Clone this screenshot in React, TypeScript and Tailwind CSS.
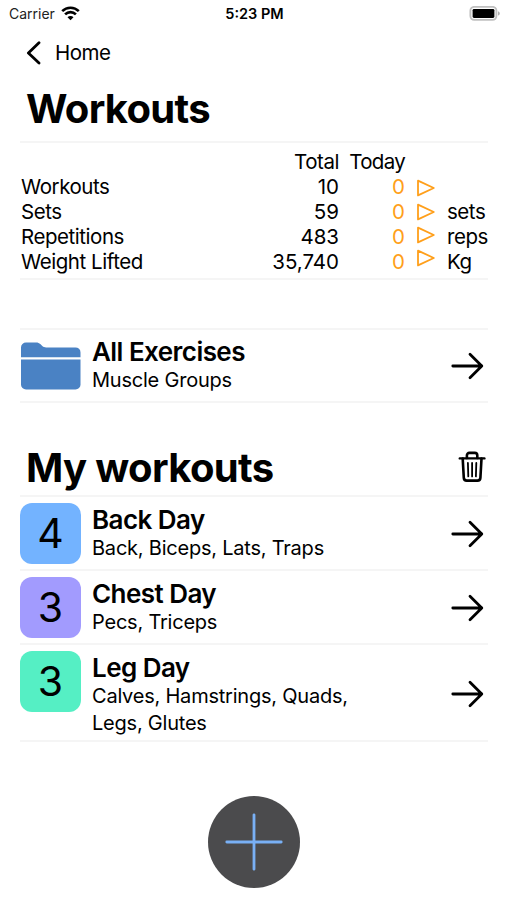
import React from 'react';

interface Stat {
  label: string;
  total: string;
  today: number;
  unit: string;
}

interface Workout {
  name: string;
  muscles: string;
  count: number;
  color: string;
}

const stats: Stat[] = [
  { label: 'Workouts', total: '10', today: 0, unit: '' },
  { label: 'Sets', total: '59', today: 0, unit: 'sets' },
  { label: 'Repetitions', total: '483', today: 0, unit: 'reps' },
  { label: 'Weight Lifted', total: '35,740', today: 0, unit: 'Kg' },
];

const workouts: Workout[] = [
  { name: 'Back Day', muscles: 'Back, Biceps, Lats, Traps', count: 4, color: 'bg-[#73b3ff]' },
  { name: 'Chest Day', muscles: 'Pecs, Triceps', count: 3, color: 'bg-[#a29bfe]' },
  { name: 'Leg Day', muscles: 'Calves, Hamstrings, Quads, Legs, Glutes', count: 3, color: 'bg-[#55efc4]' },
];

function WifiIcon() {
  return (
    <svg width="19" height="15" viewBox="0 0 19 15" fill="none" stroke="black" strokeWidth="2.6">
      <path d="M1.2 5.1a11.8 11.8 0 0 1 16.6 0" />
      <path d="M4.1 8.4a7.6 7.6 0 0 1 10.8 0" />
      <path d="M9.5 14.2 6.5 11.2a4.2 4.2 0 0 1 6 0Z" fill="black" stroke="none" />
    </svg>
  );
}

function BatteryIcon() {
  return (
    <svg width="31" height="15" viewBox="0 0 31 15">
      <rect x="1.4" y="0.9" width="26" height="13" rx="3.8" fill="white" stroke="#c0c0c0" strokeWidth="1.9" />
      <rect x="3.6" y="2.9" width="21.8" height="9" rx="1.4" fill="black" />
      <path d="M29 5.2v4.4c2.4-.8 2.4-3.6 0-4.4Z" fill="#b0b0b0" />
    </svg>
  );
}

function FolderIcon() {
  return (
    <svg className="shrink-0" width="61" height="48" viewBox="0 0 61 48" fill="#4a82c4">
      <path d="M1 15.2V5.5a5 5 0 0 1 5-5h10.3c1.6 0 2.8.5 4 1.6l2 1.9c1.1 1 2.3 1.4 3.8 1.4h29.4a5 5 0 0 1 5 5v4.8Z" />
      <path d="M1 17.4h59.5v25.1a5 5 0 0 1-5 5H6a5 5 0 0 1-5-5Z" />
    </svg>
  );
}

function TriangleIcon() {
  return (
    <svg width="20" height="18" viewBox="0 0 20 18" fill="none" stroke="#ff9f1a" strokeWidth="1.8" strokeLinejoin="round">
      <path d="M2 1.6v14.8L17.8 9Z" />
    </svg>
  );
}

function TrashIcon() {
  return (
    <svg width="28" height="32" viewBox="0 0 28 32" fill="none" stroke="black" strokeLinecap="round" strokeLinejoin="round">
      <path d="M1.8 7.4h24.6" strokeWidth="2.4" />
      <path d="M8.9 7V4.4c0-1.5 1-2.5 2.5-2.5h5.4c1.5 0 2.5 1 2.5 2.5V7" strokeWidth="2.6" />
      <path d="m4.7 7.6 1.1 19.3c.1 1.8 1.2 2.7 2.9 2.7h10.8c1.7 0 2.8-.9 2.9-2.7l1.1-19.3" strokeWidth="2.6" />
      <path d="m9.9 12 .4 13.4M14.1 12v13.4M18.3 12l-.4 13.4" strokeWidth="1.8" />
    </svg>
  );
}

function ArrowIcon() {
  return (
    <svg
      className="shrink-0"
      width="33"
      height="28"
      viewBox="0 0 33 28"
      fill="none"
      stroke="black"
      strokeWidth="2.8"
      strokeLinecap="round"
      strokeLinejoin="round"
    >
      <path d="M1.8 14h29M19 2.2 30.8 14 19 25.8" />
    </svg>
  );
}

function RowText({ title, subtitle }: { title: string; subtitle: string }) {
  return (
    <div className="ml-[11px] w-[280px]">
      <h3 className="text-[26px] leading-[30px] font-semibold tracking-[-0.55px]">{title}</h3>
      <p className="text-[20px] leading-[27px] tracking-[-0.22px]">{subtitle}</p>
    </div>
  );
}

export default function App() {
  return (
    <div className="h-[900px] w-[507px] overflow-hidden bg-white font-['Inter',sans-serif] text-black">
      <div className="grid h-[27px] grid-cols-3 items-center pl-[9px] pr-[7px]">
        <div className="flex items-center gap-[6px] text-[14px] text-[#222]">
          Carrier
          <WifiIcon />
        </div>
        <div className="text-center text-[14.5px] font-semibold">5:23 PM</div>
        <div className="flex justify-end">
          <BatteryIcon />
        </div>
      </div>

      <div className="ml-[20px] w-[468px]">
        <button className="flex h-[51px] items-center pl-[6px] text-[20.5px] tracking-[-0.5px]">
          <svg width="16" height="24" viewBox="0 0 16 24" fill="none" stroke="black" strokeWidth="2.8" strokeLinecap="round" strokeLinejoin="round">
            <path d="M13 1.7 2.4 12 13 22.1" />
          </svg>
          <span className="ml-[13px] pt-[2px]">Home</span>
        </button>

        <h1 className="h-[63px] pl-[6px] text-[40px] leading-[62px] font-bold tracking-[-0.7px]">Workouts</h1>

        <div className="flex h-[139px] items-start border-y-2 border-[#f5f5f5] pt-[7.4px] text-[20.5px] leading-[24.8px] tracking-[-0.45px]">
          <div className="w-[160px] pt-[24.8px] pl-px">
            {stats.map((stat) => (
              <div key={stat.label}>{stat.label}</div>
            ))}
          </div>
          <div className="w-[159px] text-right">
            <div>Total</div>
            {stats.map((stat) => (
              <div key={stat.label} className="tracking-normal">
                {stat.total}
              </div>
            ))}
          </div>
          <div className="w-[66px] text-right">
            <div className="tracking-[-0.7px]">Today</div>
            {stats.map((stat) => (
              <div key={stat.label} className="tracking-normal text-[#ff9f1a]">
                {stat.today}
              </div>
            ))}
          </div>
          <div className="flex w-[42px] flex-col gap-[5.3px] pt-[28.9px] pl-[11px]">
            {stats.map((stat) => (
              <TriangleIcon key={stat.label} />
            ))}
          </div>
          <div className="pt-[24.8px]">
            {stats.map((stat) => (
              <div key={stat.label} className="h-[24.8px]">
                {stat.unit}
              </div>
            ))}
          </div>
        </div>

        <div className="mt-[48px] flex h-[75px] items-center border-y-2 border-[#f5f5f5]">
          <FolderIcon />
          <RowText title="All Exercises" subtitle="Muscle Groups" />
          <div className="ml-auto pr-[4px]">
            <ArrowIcon />
          </div>
        </div>

        <div className="flex h-[94px] items-end justify-between border-b-2 border-[#f5f5f5] pl-[6px]">
          <h2 className="text-[40px] leading-[55px] font-bold tracking-[-0.65px]">My workouts</h2>
          <button className="mb-[12px] pr-[2px]">
            <TrashIcon />
          </button>
        </div>

        {workouts.map((workout) => (
          <div key={workout.name} className="flex items-start border-b-2 border-[#f5f5f5] pt-[6px] pb-[3px]">
            <div className={`mb-[2px] flex size-[61px] shrink-0 items-center justify-center rounded-[12px] pt-px text-[41px] ${workout.color}`}>
              {workout.count}
            </div>
            <div className="pt-[2px]">
              <RowText title={workout.name} subtitle={workout.muscles} />
            </div>
            <div className="ml-auto self-center pr-[4px] pb-px">
              <ArrowIcon />
            </div>
          </div>
        ))}
      </div>

      <div className="mt-[54px] flex justify-center">
        <button className="flex size-[92px] items-center justify-center rounded-full bg-[#4b4b4d]">
          <svg width="58" height="58" viewBox="0 0 58 58" stroke="#79b0f5" strokeWidth="2.8" strokeLinecap="round">
            <path d="M29 1.8v54.4M1.8 29h54.4" />
          </svg>
        </button>
      </div>
    </div>
  );
}
